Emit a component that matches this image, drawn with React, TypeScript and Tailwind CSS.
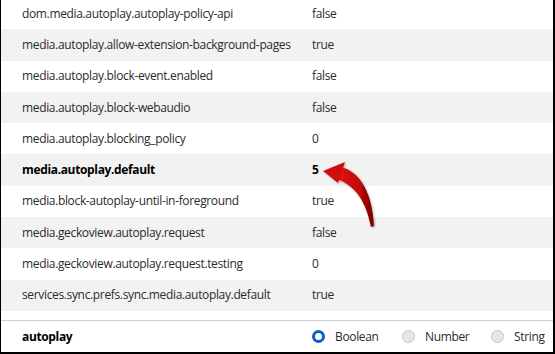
import React from "react";

const rows: { name: string; value: string; bold?: boolean }[] = [
  { name: "dom.media.autoplay.autoplay-policy-api", value: "false" },
  { name: "media.autoplay.allow-extension-background-pages", value: "true" },
  { name: "media.autoplay.block-event.enabled", value: "false" },
  { name: "media.autoplay.block-webaudio", value: "false" },
  { name: "media.autoplay.blocking_policy", value: "0" },
  { name: "media.autoplay.default", value: "5", bold: true },
  { name: "media.block-autoplay-until-in-foreground", value: "true" },
  { name: "media.geckoview.autoplay.request", value: "false" },
  { name: "media.geckoview.autoplay.request.testing", value: "0" },
  { name: "services.sync.prefs.sync.media.autoplay.default", value: "true" },
];

function Radio({ checked, label }: { checked?: boolean; label: string }) {
  return (
    <div className="flex items-center gap-[10px]">
      {checked ? (
        <span className="block w-[13px] h-[13px] rounded-full border-[3.5px] border-[#0a5fc4] bg-white" />
      ) : (
        <span className="block w-[13px] h-[13px] rounded-full border border-[#c4c4c4] bg-[#e6e6e6]" />
      )}
      <span>{label}</span>
    </div>
  );
}

export default function App() {
  return (
    <div
      className="relative w-[555px] h-[354px] overflow-hidden bg-white border-l border-r-2 border-b-2 border-black flex flex-col text-[12px] tracking-[-0.35px] text-[#2b2b2b]"
      style={{ fontFamily: '"Open Sans", "Noto Sans", sans-serif' }}
    >
      <div className="-mt-[2px] flex flex-col">
        {rows.map((r, i) => (
          <div
            key={r.name}
            className={`h-[31.3px] shrink-0 flex items-center whitespace-nowrap ${i % 2 === 1 ? "bg-[#f2f2f2]" : "bg-white"}`}
          >
            <div className={`w-[311px] shrink-0 pl-[21px] ${r.bold ? "font-bold text-black" : ""}`}>{r.name}</div>
            <div className={r.bold ? "font-bold text-black" : ""}>{r.value}</div>
          </div>
        ))}
      </div>
      <div className="flex-1" />
      <div className="h-[32px] shrink-0 border-t border-[#cfcfcf] flex items-center">
        <div className="w-[311px] shrink-0 pl-[21px] font-bold text-black">autoplay</div>
        <div className="flex items-center">
          <div className="w-[90px]">
            <Radio checked label="Boolean" />
          </div>
          <div className="w-[89px]">
            <Radio label="Number" />
          </div>
          <Radio label="String" />
        </div>
      </div>

      <svg
        className="absolute left-0 top-0 pointer-events-none"
        width="555"
        height="354"
        viewBox="0 0 555 354"
      >
        <defs>
          <linearGradient id="ag" x1="0" y1="0" x2="1" y2="0">
            <stop offset="0" stopColor="#e41616" />
            <stop offset="0.6" stopColor="#c00808" />
            <stop offset="1" stopColor="#7a0000" />
          </linearGradient>
          <filter id="sh" x="-20%" y="-20%" width="140%" height="140%">
            <feDropShadow dx="1" dy="1" stdDeviation="1" floodColor="#000" floodOpacity="0.3" />
          </filter>
        </defs>
        <g filter="url(#sh)">
          <path
            d="M 339 167 C 356 170, 371 188, 373 226 L 370 227 C 365 202, 355 186, 336 179 Z"
            fill="url(#ag)"
          />
          <path d="M 322 171 L 344 162 L 337 183 Z" fill="#d20c0c" />
        </g>
      </svg>
    </div>
  );
}
